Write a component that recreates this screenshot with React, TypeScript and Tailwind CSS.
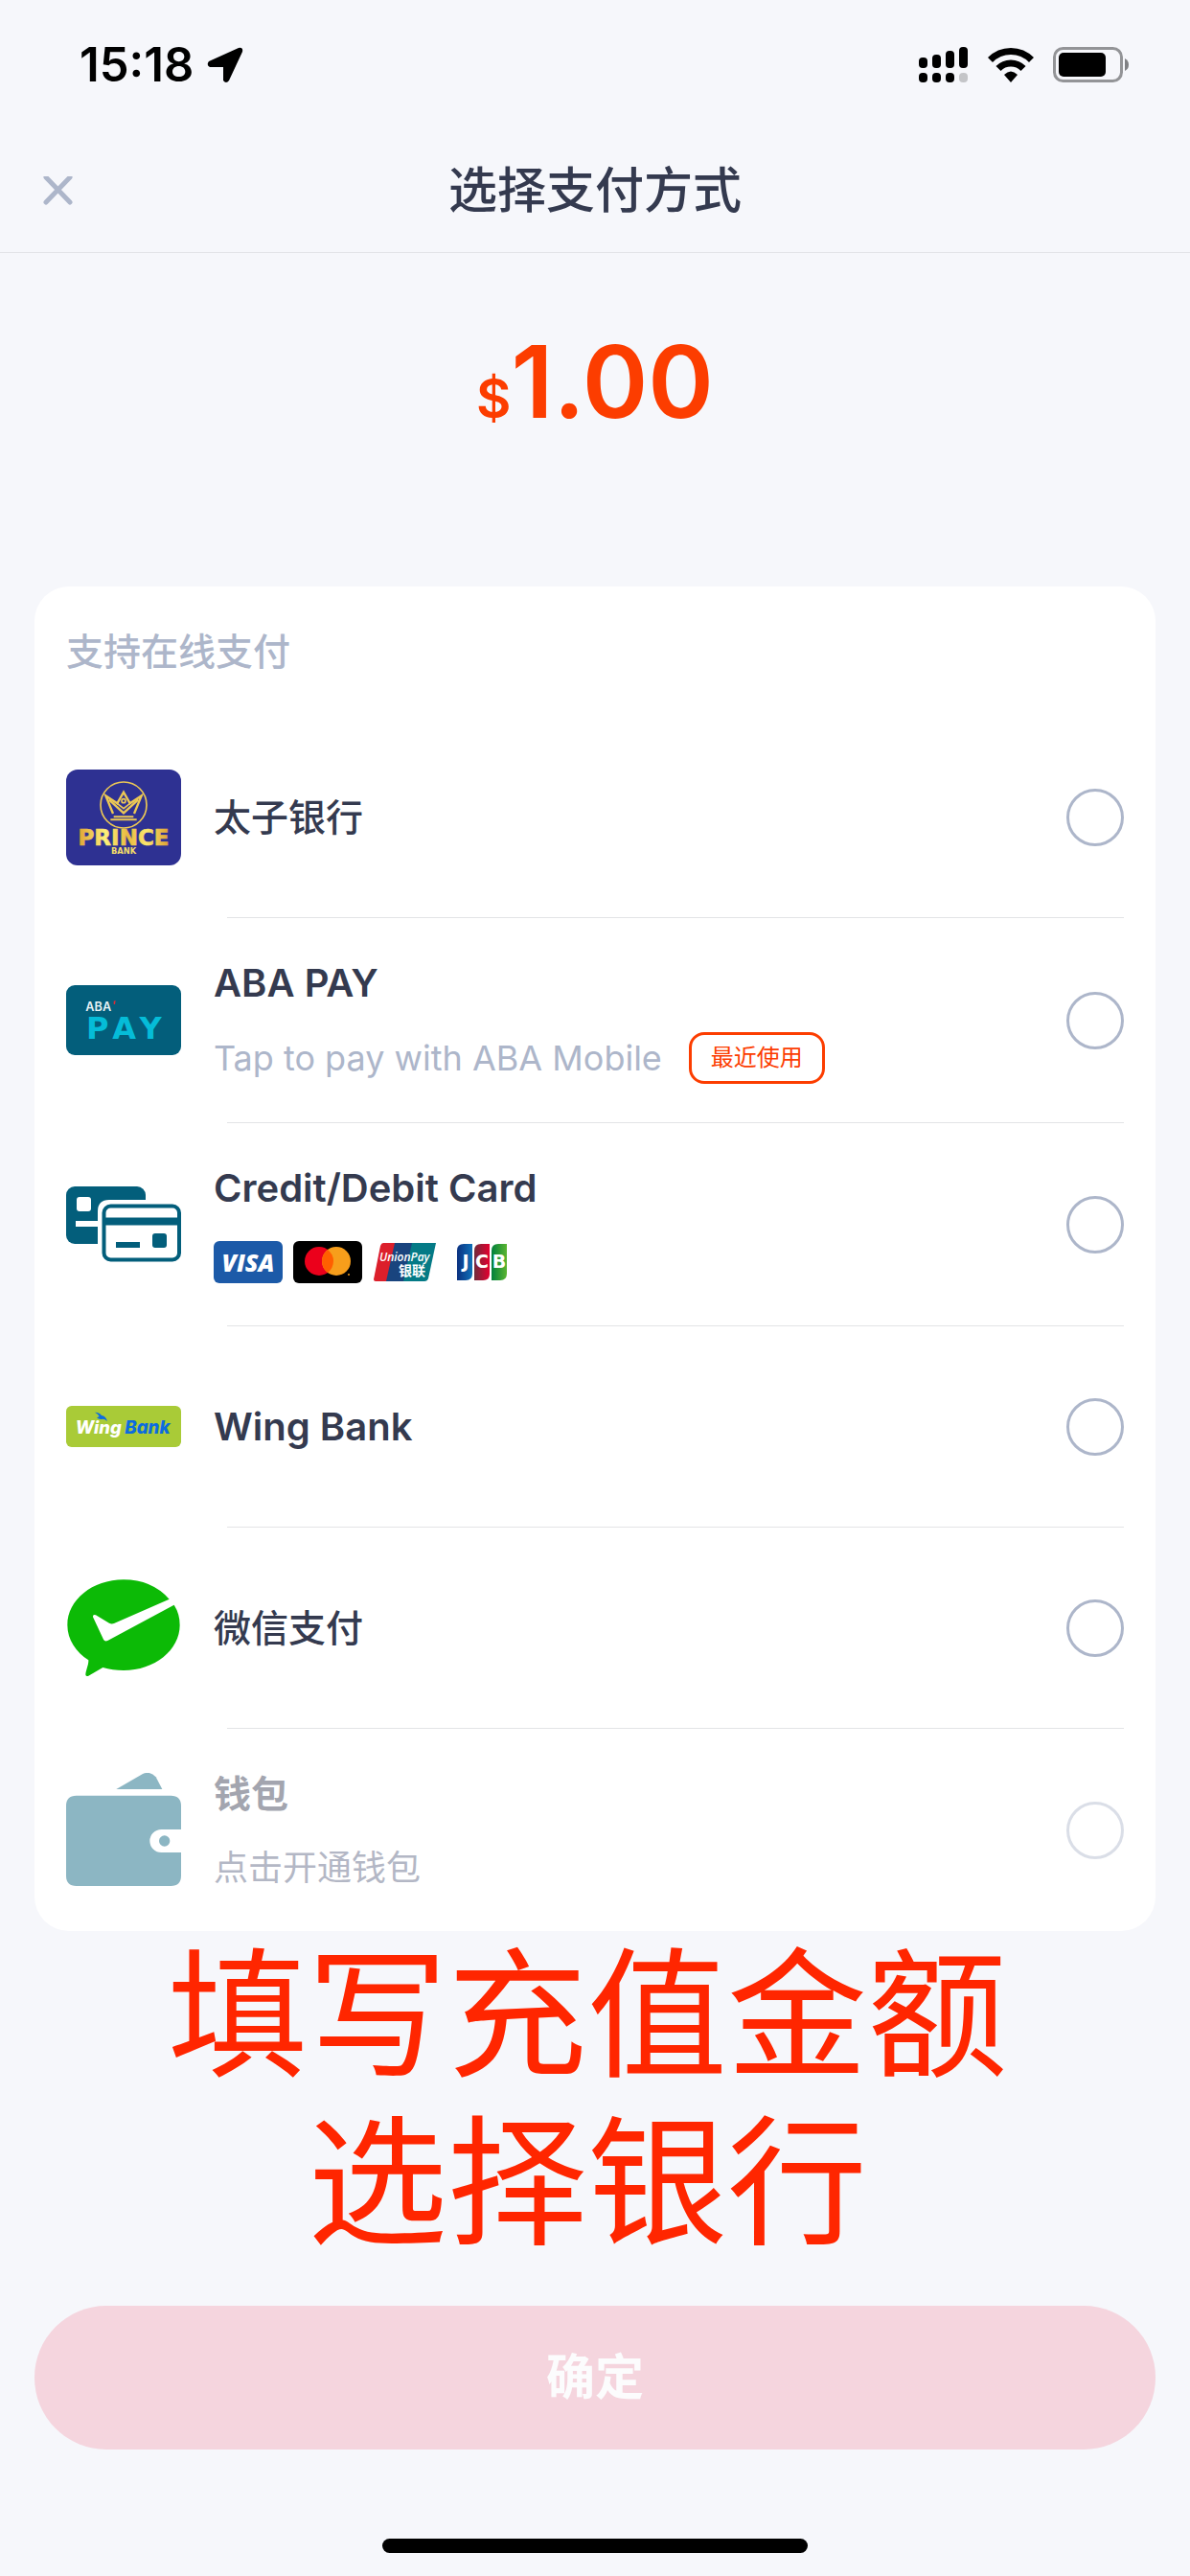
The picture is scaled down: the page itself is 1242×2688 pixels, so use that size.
import React, { Fragment, useState } from 'react';

const PrinceLogo = () => (
    <svg viewBox="0 0 360 300" className="w-[120px]" aria-hidden="true">
        <defs>
            <linearGradient id="gold" x1="0" x2="1" y1="0" y2="0">
                <stop offset="0" stopColor="#dfa433" />
                <stop offset="0.3" stopColor="#fdf07a" />
                <stop offset="0.55" stopColor="#e9b93f" />
                <stop offset="0.75" stopColor="#fbe66e" />
                <stop offset="1" stopColor="#dba032" />
            </linearGradient>
        </defs>
        <rect width="360" height="300" rx="36" fill="#2e3192" />
        <g fill="none" stroke="#ecc855" strokeWidth="7">
            <circle cx="180" cy="111" r="72" strokeWidth="5" />
            <path d="M147 138L124 82L160 106L180 71L200 106L236 82L213 138" />
            <path d="M134 94L180 136L226 94" />
            <path d="M160 106L180 122L200 106" strokeWidth="5" />
            <circle cx="180" cy="98" r="6" strokeWidth="5" />
            <path d="M149 148H211M139 157H221" strokeWidth="6" />
        </g>
        <text x="180" y="238" textAnchor="middle" fontSize="69" fontWeight="700" fontFamily="DejaVu Sans, sans-serif" fill="url(#gold)" stroke="url(#gold)" strokeWidth="2">PRINCE</text>
        <text x="180" y="265" textAnchor="middle" fontSize="25" fontWeight="700" fontFamily="DejaVu Sans, sans-serif" fill="#f3dc68">BANK</text>
    </svg>
);

const AbaLogo = () => (
    <svg viewBox="0 0 360 219" className="w-[120px]" aria-hidden="true">
        <rect width="360" height="219" rx="27" fill="#035e7b" />
        <text x="61" y="80" fontSize="38" fontWeight="600" fontFamily="Inter, sans-serif" fill="#e8f2f5">ABA</text>
        <path d="M149 50l6-2-2 12h-4z" fill="#e02b35" />
        <g fontSize="96" fontWeight="700" fontFamily="DejaVu Sans, sans-serif" fill="#05bcd8" textAnchor="middle">
            <text x="98" y="167">P</text>
            <text x="182" y="167">A</text>
            <text x="264" y="167">Y</text>
        </g>
    </svg>
);

const CardsIcon = () => (
    <svg viewBox="0 0 120 79" className="w-[120px]" aria-hidden="true">
        <rect width="83" height="60" rx="9" fill="#035e7b" />
        <rect x="11" y="11" width="15" height="15" rx="3" fill="#fff" />
        <rect x="10" y="36" width="26" height="6" fill="#fff" />
        <path d="M33 80V26Q33 14 45 14H120V80z" fill="#fff" />
        <rect x="39.5" y="20.5" width="78.5" height="56" rx="7" fill="#fff" stroke="#035e7b" strokeWidth="4" />
        <path d="M39 36.500H118" stroke="#035e7b" strokeWidth="8" />
        <rect x="52" y="58" width="25" height="6" fill="#035e7b" />
        <rect x="90" y="49" width="15" height="15" rx="3" fill="#035e7b" />
    </svg>
);

const WingLogo = () => (
    <svg viewBox="0 0 360 129" className="w-[120px]" aria-hidden="true">
        <rect width="360" height="129" rx="17" fill="#a9cb37" />
        <text x="29" y="88" fontSize="55" fontWeight="800" fontStyle="italic" fontFamily="Inter, sans-serif" fill="#fff">Wing</text>
        <text x="184" y="88" fontSize="56" fontWeight="800" fontStyle="italic" fontFamily="Inter, sans-serif" fill="#0b6be0">Bank</text>
        <path d="M90 20Q106 21 111 30Q124 31 129 48Q118 39 111 42Q103 43 96 37L104 33Q99 24 90 20z" fill="#0b6be0" />
    </svg>
);

const WechatIcon = () => (
    <svg viewBox="0 0 360 305" className="w-[120px]" aria-hidden="true">
        <path
            d="M180 1C82 1 4 65 4 143C4 188 31 228 70 253C71 267 61 286 61 299Q63 305 70 302L115 276Q145 285 180 285C277 285 356 221 356 143Q356 108 338 80L130 192Q121 196 117 188L84 118Q83 108 93 112L135 137Q142 141 150 138L323 62Q268 1 180 1z"
            fill="#0cba06"
        />
    </svg>
);

const WalletIcon = () => (
    <svg viewBox="0 0 360 355" className="w-[120px]" aria-hidden="true">
        <path d="M157 51L240 3Q265 -7 281 13L301 51z" fill="#035e7b" />
        <path
            d="M32 71H328Q360 71 360 103V177H298A36 36 0 0 0 298 249H360V322Q360 354 328 354H32Q0 354 0 322V103Q0 71 32 71z"
            fill="#035e7b"
        />
        <circle cx="308" cy="213" r="17" fill="#035e7b" />
    </svg>
);

const CardBrands = () => (
    <div className="flex h-[52px] items-center gap-[11px]">
        <svg viewBox="0 0 72 44" className="w-[72px]" role="img" aria-label="Visa">
            <rect width="72" height="44" rx="6" fill="#1c5aa8" />
            <text x="36" y="32" textAnchor="middle" fontSize="25" fontWeight="800" fontStyle="italic" fontFamily="Open Sans, sans-serif" fill="#fff">VISA</text>
        </svg>
        <svg viewBox="0 0 72 44" className="w-[72px]" role="img" aria-label="Mastercard">
            <rect width="72" height="44" rx="6" fill="#000" />
            <circle cx="27" cy="21" r="15" fill="#eb001b" />
            <circle cx="45" cy="21" r="15" fill="#f79e1b" />
            <path d="M36 9A15 15 0 0 1 36 33A15 15 0 0 1 36 9z" fill="#ff5f00" />
            <circle cx="58" cy="35" r="1" fill="#f79e1b" />
        </svg>
        <svg viewBox="0 0 72 44" className="w-[72px]" role="img" aria-label="UnionPay">
            <path d="M11 2H31L21 42H3Q1 42 1 40L8 5Q9 2 11 2z" fill="#dc1f2b" />
            <path d="M23 2H44L34 42H14z" fill="#19447e" />
            <path d="M41 2H66L58 39Q57 42 54 42H32z" fill="#047a86" />
            <text x="7" y="21" fontSize="12" fontWeight="600" fontStyle="italic" fontFamily="Open Sans, sans-serif" fill="#fff">UnionPay</text>
            <text x="27" y="36" fontSize="14" fontWeight="700" fontFamily="Noto Sans CJK SC, sans-serif" fill="#fff">银联</text>
        </svg>
        <svg viewBox="0 0 72 44" className="w-[72px]" role="img" aria-label="JCB">
            <defs>
                <linearGradient id="jcbBlue"><stop stopColor="#0b3180" /><stop offset="1" stopColor="#0e70b8" /></linearGradient>
                <linearGradient id="jcbRed"><stop stopColor="#6f2a3b" /><stop offset="1" stopColor="#e4002f" /></linearGradient>
                <linearGradient id="jcbGreen"><stop stopColor="#00803c" /><stop offset="1" stopColor="#5bb531" /></linearGradient>
            </defs>
            <path d="M12 3H21V34Q21 41 14 41H5V10Q5 3 12 3z" fill="url(#jcbBlue)" />
            <path d="M30 3H39V34Q39 41 32 41H23V10Q23 3 30 3z" fill="url(#jcbRed)" />
            <path d="M48 3H57V34Q57 41 50 41H41V10Q41 3 48 3z" fill="url(#jcbGreen)" />
            <g fontSize="19" fontWeight="700" fontFamily="DejaVu Sans, sans-serif" fill="#fff" textAnchor="middle">
                <text x="14" y="28">J</text>
                <text x="31" y="28">C</text>
                <text x="49" y="28">B</text>
            </g>
        </svg>
    </div>
);

// Chinese names use a lighter weight than the latin ones
const zhName = 'text-[39px] font-medium';
const enName = 'text-[40px] font-semibold';

const methods = [
    { id: 'prince', name: '太子银行', style: zhName, icon: PrinceLogo },
    { id: 'aba', name: 'ABA PAY', style: enName, icon: AbaLogo, desc: 'Tap to pay with ABA Mobile', tag: '最近使用' },
    { id: 'card', name: 'Credit/Debit Card', style: enName, icon: CardsIcon, brands: true },
    { id: 'wing', name: 'Wing Bank', style: enName, icon: WingLogo },
    { id: 'wechat', name: '微信支付', style: zhName, icon: WechatIcon },
    { id: 'wallet', name: '钱包', style: 'text-[39px] font-semibold', icon: WalletIcon, desc: '点击开通钱包', disabled: true },
];

const StatusBar = () => (
    <div className="flex h-[132px] items-center justify-between pr-16 pl-[83px] pt-1 text-black">
        <div className="flex items-center gap-[14px]">
            <span className="text-[49px] font-semibold">15:18</span>
            <svg viewBox="0 0 38 38" className="w-[38px]" aria-hidden="true">
                <path d="M33 1Q38 0 37 5L23 35Q20 39 17 35V21H3Q-1 19 2 15z" fill="currentColor" />
            </svg>
        </div>
        <div className="flex items-center gap-5">
            <svg viewBox="0 0 52 38" className="w-[52px]" fill="currentColor" aria-hidden="true">
                <rect x="0" y="11" width="9" height="11" rx="4" />
                <rect x="14" y="8" width="9" height="14" rx="4" />
                <rect x="28" y="4" width="9" height="18" rx="4" />
                <rect x="42" y="0" width="9" height="22" rx="4" />
                <rect x="0" y="27" width="9" height="10" rx="4" />
                <rect x="14" y="27" width="9" height="10" rx="4" />
                <rect x="28" y="27" width="9" height="10" rx="4" />
                <rect x="42" y="27" width="9" height="10" rx="4" opacity="0.2" />
            </svg>
            <svg viewBox="0 0 48 38" className="w-12" aria-hidden="true">
                <g fill="none" stroke="currentColor" strokeWidth="7">
                    <path d="M2.500 13.500A30 30 0 0 1 45.500 13.500" />
                    <path d="M11 22.500A18 18 0 0 1 37 22.500" />
                </g>
                <path d="M24 37L17 29Q24 22 31 29z" fill="currentColor" />
            </svg>
            <svg viewBox="0 0 79 38" className="w-[79px]" aria-hidden="true">
                <rect x="1.500" y="1.500" width="70" height="34" rx="9" fill="none" stroke="#939497" strokeWidth="3" />
                <rect x="6" y="6" width="49" height="25" rx="5" fill="currentColor" />
                <path d="M75 12Q79 14 79 18.500T75 25z" fill="#808184" />
            </svg>
        </div>
    </div>
);

export default function App() {
    const [selected, setSelected] = useState('');

    return (
        <div className="flex min-h-screen flex-col bg-[#f6f7fb] font-['Inter','Noto_Sans_CJK_SC',sans-serif] text-[#343a4f]">
            <StatusBar />

            {/* Header */}
            <header className="grid h-[132px] grid-cols-[1fr_auto_1fr] items-center border-b border-[#e3e4e8] px-[45px] pt-1">
                <button aria-label="关闭" className="w-8">
                    <svg viewBox="0 0 32 32" className="w-8" aria-hidden="true">
                        <path d="M3 1L28 27M28 1L3 27" stroke="#adb6ca" strokeWidth="5" strokeLinecap="round" />
                    </svg>
                </button>
                <h1 className="text-[51px] font-medium">选择支付方式</h1>
            </header>

            <main className="flex flex-1 flex-col px-9">
                <div className="flex h-[348px] items-baseline justify-center pt-[82px] font-semibold text-[#fc3d00]">
                    <span className="text-[56px] leading-none">$</span>
                    <span className="text-[104px] leading-none">1.00</span>
                </div>

                {/* Payment methods */}
                <section className="rounded-[36px] bg-white px-[33px]">
                    <h2 className="h-[136px] pt-10 text-[39px] leading-[56px] font-medium text-[#adb6ca]">支持在线支付</h2>
                    {methods.map((item, i) => (
                        <Fragment key={item.id}>
                            {i > 0 && <div className="ml-[168px] h-px bg-[#e3e4e6]" />}
                            <label className={`flex min-h-[209px] items-center ${item.disabled ? 'opacity-45' : ''}`}>
                                <div className="w-[120px] shrink-0">
                                    <item.icon />
                                </div>
                                <div className="ml-[34px] flex flex-1 flex-col gap-[23px] py-10">
                                    <span className={`leading-[56px] ${item.style}`}>{item.name}</span>
                                    {item.desc && (
                                        <div className={`flex items-center gap-7 text-4xl leading-[52px] ${item.disabled ? 'text-[#586180]' : 'text-[#adb6ca]'}`}>
                                            <span>{item.desc}</span>
                                            {item.tag && (
                                                <span className="rounded-2xl border-3 border-[#fc3d00] px-5 text-2xl leading-[48px] text-[#fc3d00]">{item.tag}</span>
                                            )}
                                        </div>
                                    )}
                                    {item.brands && <CardBrands />}
                                </div>
                                <input
                                    type="radio"
                                    name="method"
                                    value={item.id}
                                    disabled={item.disabled}
                                    checked={selected === item.id}
                                    onChange={() => setSelected(item.id)}
                                    className="size-[60px] shrink-0 appearance-none rounded-full border-3 border-[#adb6ca] checked:border-[16px] checked:border-[#fc3d00]"
                                />
                            </label>
                        </Fragment>
                    ))}
                </section>

                <p className="pr-4 text-center text-[146px] leading-[175px] text-[#ff2600]">
                    填写充值金额
                    <br />
                    选择银行
                </p>

                <button className="mt-auto h-[150px] rounded-full bg-[#f5d5de] text-[51px] font-semibold text-[#fcfcfd]">确定</button>
            </main>

            <div className="flex h-[132px] items-end justify-center pb-6">
                <div className="h-[15px] w-[444px] rounded-full bg-black" />
            </div>
        </div>
    );
}
